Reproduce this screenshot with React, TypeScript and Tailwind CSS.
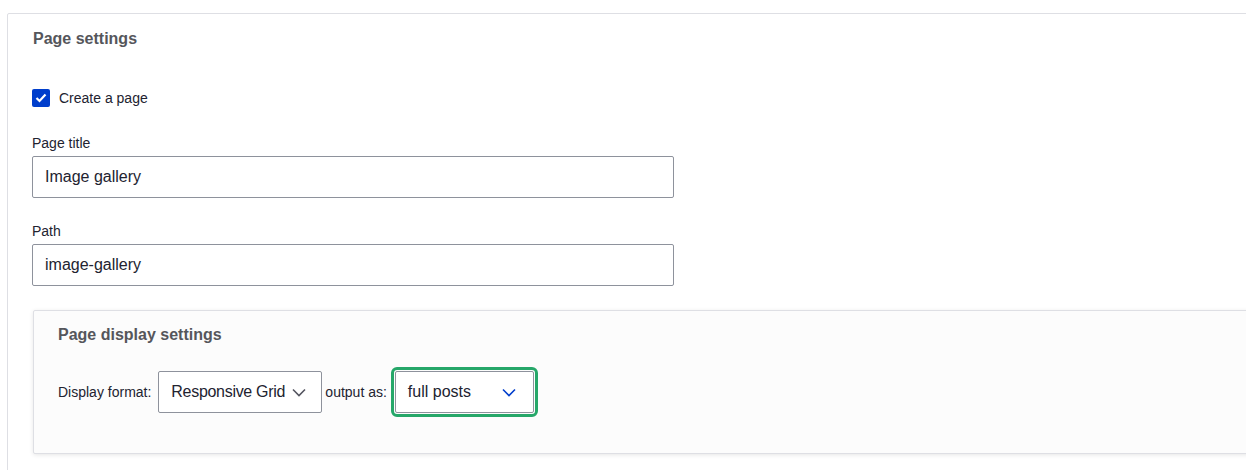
import React from "react";

const font = { fontFamily: '"Liberation Sans", Arial, sans-serif' };

function Chevron({ color }: { color: string }) {
  return (
    <svg width="14" height="9" viewBox="0 0 14 9" fill="none">
      <path d="M1 1.5 L7 7.5 L13 1.5" stroke={color} strokeWidth="1.6" />
    </svg>
  );
}

export default function App() {
  return (
    <div
      className="w-[1246px] h-[470px] overflow-hidden bg-white text-[#222330]"
      style={font}
    >
      <div className="ml-[7px] mt-[13px] w-[1280px] border border-[#dedfe4] rounded-[2px] bg-white pl-[24px] pt-[15px] pb-[20px]">
        <div className="pl-[1px] text-[16px] leading-[20px] font-bold text-[#55565b]">
          Page settings
        </div>

        <label className="mt-[40px] flex items-center h-[18px]">
          <span className="w-[18px] h-[18px] rounded-[2px] bg-[#003ecc] flex items-center justify-center">
            <svg width="12" height="10" viewBox="0 0 12 10" fill="none">
              <path d="M1.5 5 L4.5 8 L10.5 1.5" stroke="white" strokeWidth="2.2" />
            </svg>
          </span>
          <span className="ml-[9px] text-[14px] leading-[20px]">Create a page</span>
        </label>

        <div className="mt-[26px] text-[14px] leading-[20px]">Page title</div>
        <div className="mt-[3px] w-[642px] h-[42px] border border-[#8e929c] rounded-[2px] flex items-center pl-[12px] text-[16px]">
          Image gallery
        </div>

        <div className="mt-[23px] text-[14px] leading-[20px]">Path</div>
        <div className="mt-[3px] w-[642px] h-[42px] border border-[#8e929c] rounded-[2px] flex items-center pl-[12px] text-[16px]">
          image-gallery
        </div>

        <div className="ml-[1px] mt-[24px] w-[1240px] border border-[#dedfe4] rounded-[2px] bg-[#fcfcfc] shadow-[0_1px_4px_rgba(0,0,0,0.1)] pl-[24px] pt-[14px] pb-[40px]">
          <div className="text-[16px] leading-[20px] font-bold text-[#55565b]">
            Page display settings
          </div>
          <div className="mt-[26px] flex items-center text-[14px]">
            <span className="mr-[7px]">Display format:</span>
            <div className="w-[164px] h-[42px] border border-[#8e929c] rounded-[2px] bg-white flex items-center pl-[12px] pr-[15px] justify-between text-[16px]">
              <span className="tracking-[-0.3px]">Responsive Grid</span>
              <Chevron color="#545560" />
            </div>
            <span className="ml-[3px] mr-[8px]">output as:</span>
            <div className="w-[139px] h-[42px] border border-[#8e929c] rounded-[2px] bg-white flex items-center pl-[12px] pr-[17px] justify-between text-[16px] outline-[3px] outline-solid outline-[#26a769] outline-offset-[1px]">
              <span>full posts</span>
              <Chevron color="#003ecc" />
            </div>
          </div>
        </div>
      </div>
    </div>
  );
}
